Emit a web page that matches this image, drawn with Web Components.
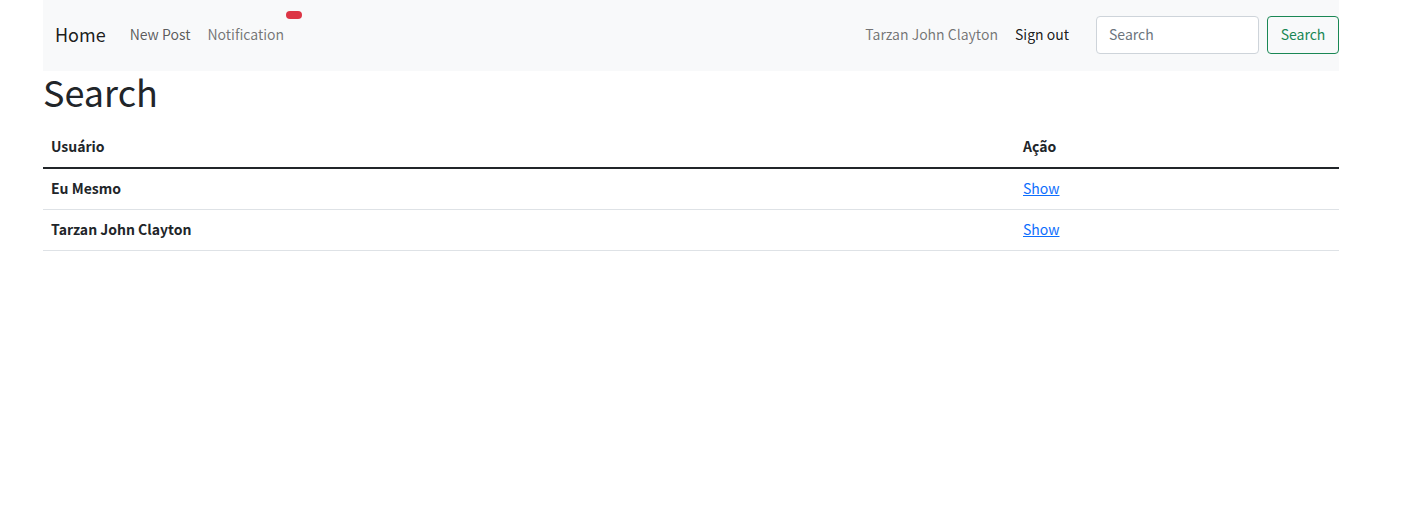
<!DOCTYPE html>
<html lang="pt-BR">
<head>
<meta charset="utf-8">
<meta name="viewport" content="width=device-width, initial-scale=1">
<title>Search</title>
<style>
  body {
    margin: 0;
    padding-right: 26px;
    background: #fff;
    color: #212529;
    font: 14px/24px "Noto Sans CJK JP", "Noto Sans", sans-serif;
  }
</style>
</head>
<body>
<page-container>
  <site-nav>
    <nav-link slot="start" href="#new">New Post</nav-link>
    <nav-link slot="start" tone="muted" href="#notifications" badge>Notification</nav-link>
    <nav-link slot="end" tone="muted" href="#me">Tarzan John Clayton</nav-link>
    <nav-link slot="end" tone="strong" href="#out">Sign out</nav-link>
    <search-form slot="end"></search-form>
  </site-nav>
  <page-title>Search</page-title>
  <user-table></user-table>
</page-container>

<script>
  function withTemplate(markup) {
    const template = document.createElement('template');
    template.innerHTML = markup;
    return class extends HTMLElement {
      constructor() {
        super();
        this.attachShadow({ mode: 'open' }).append(template.content.cloneNode(true));
      }
    };
  }

  customElements.define('page-container', class extends withTemplate(`
    <style>
      :host { display: block; max-width: 1296px; margin: 0 auto; }
    </style>
    <slot></slot>`) {});

  customElements.define('site-nav', class extends withTemplate(`
    <style>
      :host { display: block; background: #f8f9fa; }
      nav { display: flex; flex-wrap: wrap; align-items: center; padding: 15px 0 16px 12px; }
      .brand { margin-right: 16px; padding: 4px 0 6px; font-size: 18px; line-height: 30px; color: rgba(0,0,0,.9); text-decoration: none; }
      .group { display: flex; align-items: center; gap: 1px; }
      .end { margin-left: auto; }
    </style>
    <nav>
      <a class="brand" href="#home">Home</a>
      <div class="group"><slot name="start"></slot></div>
      <div class="group end"><slot name="end"></slot></div>
    </nav>`) {});

  customElements.define('nav-link', class extends withTemplate(`
    <style>
      :host { display: block; }
      a { display: block; position: relative; padding: 7px 8px 9px; color: rgba(0,0,0,.65); text-decoration: none; }
      :host([tone="muted"]) a { color: rgba(0,0,0,.55); }
      :host([tone="strong"]) a { color: rgba(0,0,0,.9); }
      .badge { display: none; position: absolute; top: -4px; right: -10px; width: 16px; height: 8px; border-radius: 4px; background: #dc3545; }
      :host([badge]) .badge { display: block; }
    </style>
    <a><slot></slot><span class="badge"></span></a>`) {
    connectedCallback() {
      this.shadowRoot.querySelector('a').href = this.getAttribute('href');
    }
  });

  customElements.define('search-form', class extends withTemplate(`
    <style>
      :host { display: block; margin-left: 18px; }
      form { display: flex; gap: 8px; }
      input, button { box-sizing: border-box; height: 38px; margin: 0; padding: 5px 12px 7px; border-radius: 4px; font: inherit; }
      input { width: 163px; border: 1px solid #ced4da; background: #fff; color: #212529; }
      input::placeholder { color: #6c757d; opacity: 1; }
      button { min-width: 72px; border: 1px solid #198754; background: transparent; color: #198754; cursor: pointer; }
    </style>
    <form role="search">
      <input type="search" placeholder="Search" aria-label="Search">
      <button type="submit">Search</button>
    </form>`) {});

  customElements.define('page-title', class extends withTemplate(`
    <style>
      :host { display: block; }
      h1 { margin: 0 0 16px; font-size: 36px; line-height: 40px; font-weight: 400; }
    </style>
    <h1><slot></slot></h1>`) {});

  customElements.define('user-table', class extends withTemplate(`
    <style>
      :host { display: block; }
      table { width: 100%; border-spacing: 0; table-layout: fixed; }
      th, td { padding: 7px 8px 9px; text-align: left; border-bottom: 1px solid #dee2e6; }
      th { font-weight: 700; }
      thead th { border-bottom: 2px solid #212529; }
      thead th:first-child { width: 75%; box-sizing: border-box; }
      a { color: #0d6efd; text-decoration: underline; }
    </style>
    <table>
      <thead><tr><th scope="col">Usuário</th><th scope="col">Ação</th></tr></thead>
      <tbody>
        <tr><th scope="row">Eu Mesmo</th><td><a href="#eu-mesmo">Show</a></td></tr>
        <tr><th scope="row">Tarzan John Clayton</th><td><a href="#tarzan">Show</a></td></tr>
      </tbody>
    </table>`) {});
</script>
</body>
</html>
